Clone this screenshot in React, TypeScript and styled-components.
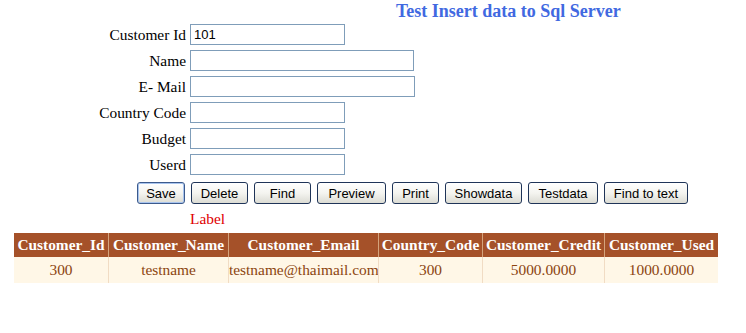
import React from 'react'
import styled, { createGlobalStyle } from 'styled-components'

const GlobalStyle = createGlobalStyle`
  body {
    margin: 0;
    background: #ffffff;
    font-family: "Liberation Serif", "Times New Roman", serif;
  }
`

const Page = styled.div`
  width: 746px;
  height: 333px;
  padding-top: 2px;
  box-sizing: border-box;
  font-family: "Liberation Serif", "Times New Roman", serif;
`

const Title = styled.h1`
  margin: 0 0 4px 396px;
  height: 18px;
  font-size: 18px;
  line-height: 18px;
  font-weight: bold;
  color: #4169e1;
  white-space: nowrap;
`

const Form = styled.div`
  display: grid;
  grid-template-columns: 96px auto;
  column-gap: 4px;
  row-gap: 5px;
  margin-left: 90px;
  justify-content: start;
`

const FieldLabel = styled.label`
  font-family: "Liberation Serif", "Times New Roman", serif;
  font-size: 15.4px;
  line-height: 21px;
  text-align: right;
  color: #000;
  white-space: nowrap;
`

const Input = styled.input<{ $w: number }>`
  width: ${({ $w }) => $w}px;
  height: 21px;
  box-sizing: border-box;
  border: 1px solid #7f9db9;
  padding: 1px 3px;
  font-family: "Liberation Sans", Arial, sans-serif;
  font-size: 13px;
  color: #000;
  outline: none;
`

const ButtonBar = styled.div`
  display: flex;
  gap: 6px;
  margin: 7px 0 0 137px;
`

const Button = styled.button<{ $w: number; $default?: boolean }>`
  width: ${({ $w }) => $w}px;
  height: 22px;
  padding: 0;
  border: 1px solid ${({ $default }) => ($default ? '#3c5a8c' : '#1f3458')};
  border-radius: 3px;
  background: linear-gradient(#ffffff 0%, #f4f4f0 50%, #dcdcd4 100%);
  box-shadow: ${({ $default }) => ($default ? 'inset 0 0 0 1px #a8c4ee' : 'none')};
  font-family: "Liberation Sans", Arial, sans-serif;
  font-size: 13px;
  color: #000;
`

const Message = styled.div`
  margin: 6px 0 0 190px;
  height: 20px;
  font-family: "Liberation Serif", "Times New Roman", serif;
  font-size: 15.4px;
  line-height: 18px;
  color: #e00000;
`

const Grid = styled.table`
  margin: 3px 0 0 14px;
  border-collapse: collapse;
  table-layout: fixed;
  width: 704px;
  font-family: "Liberation Serif", "Times New Roman", serif;
`

const HeadCell = styled.th<{ $w: number }>`
  width: ${({ $w }) => $w - 1}px;
  height: 24px;
  padding: 0;
  background: #a55129;
  color: #ffffff;
  font-size: 15.4px;
  font-weight: bold;
  text-align: center;
  white-space: nowrap;
  overflow: hidden;
  border-left: 1px solid #d4a37c;
  &:first-child {
    border-left: none;
    width: ${({ $w }) => $w}px;
  }
`

const Cell = styled.td`
  height: 26px;
  padding: 0;
  background: #fff7e7;
  color: #8c4510;
  font-size: 15.4px;
  text-align: center;
  white-space: nowrap;
  overflow: hidden;
  border-left: 1px solid #f1dcc4;
  &:first-child {
    border-left: none;
  }
`

const fields = [
  { label: 'Customer Id', w: 155, value: '101' },
  { label: 'Name', w: 224, value: '' },
  { label: 'E- Mail', w: 225, value: '' },
  { label: 'Country Code', w: 155, value: '' },
  { label: 'Budget', w: 155, value: '' },
  { label: 'Userd', w: 155, value: '' },
]

const buttons = [
  { text: 'Save', w: 48, def: true },
  { text: 'Delete', w: 57 },
  { text: 'Find', w: 57 },
  { text: 'Preview', w: 69 },
  { text: 'Print', w: 47 },
  { text: 'Showdata', w: 77 },
  { text: 'Testdata', w: 70 },
  { text: 'Find to text', w: 84 },
]

const columns = [
  { name: 'Customer_Id', w: 94 },
  { name: 'Customer_Name', w: 120 },
  { name: 'Customer_Email', w: 150 },
  { name: 'Country_Code', w: 104 },
  { name: 'Customer_Credit', w: 122 },
  { name: 'Customer_Used', w: 114 },
]

const rows = [['300', 'testname', 'testname@thaimail.com', '300', '5000.0000', '1000.0000']]

export default function App() {
  return (
    <Page>
      <GlobalStyle />
      <Title>Test Insert data to Sql Server</Title>
      <Form>
        {fields.map((f) => (
          <React.Fragment key={f.label}>
            <FieldLabel>{f.label}</FieldLabel>
            <Input $w={f.w} defaultValue={f.value} />
          </React.Fragment>
        ))}
      </Form>
      <ButtonBar>
        {buttons.map((b) => (
          <Button key={b.text} $w={b.w} $default={b.def}>
            {b.text}
          </Button>
        ))}
      </ButtonBar>
      <Message>Label</Message>
      <Grid>
        <thead>
          <tr>
            {columns.map((c) => (
              <HeadCell key={c.name} $w={c.w}>
                {c.name}
              </HeadCell>
            ))}
          </tr>
        </thead>
        <tbody>
          {rows.map((r, i) => (
            <tr key={i}>
              {r.map((v, j) => (
                <Cell key={j}>{v}</Cell>
              ))}
            </tr>
          ))}
        </tbody>
      </Grid>
    </Page>
  )
}
